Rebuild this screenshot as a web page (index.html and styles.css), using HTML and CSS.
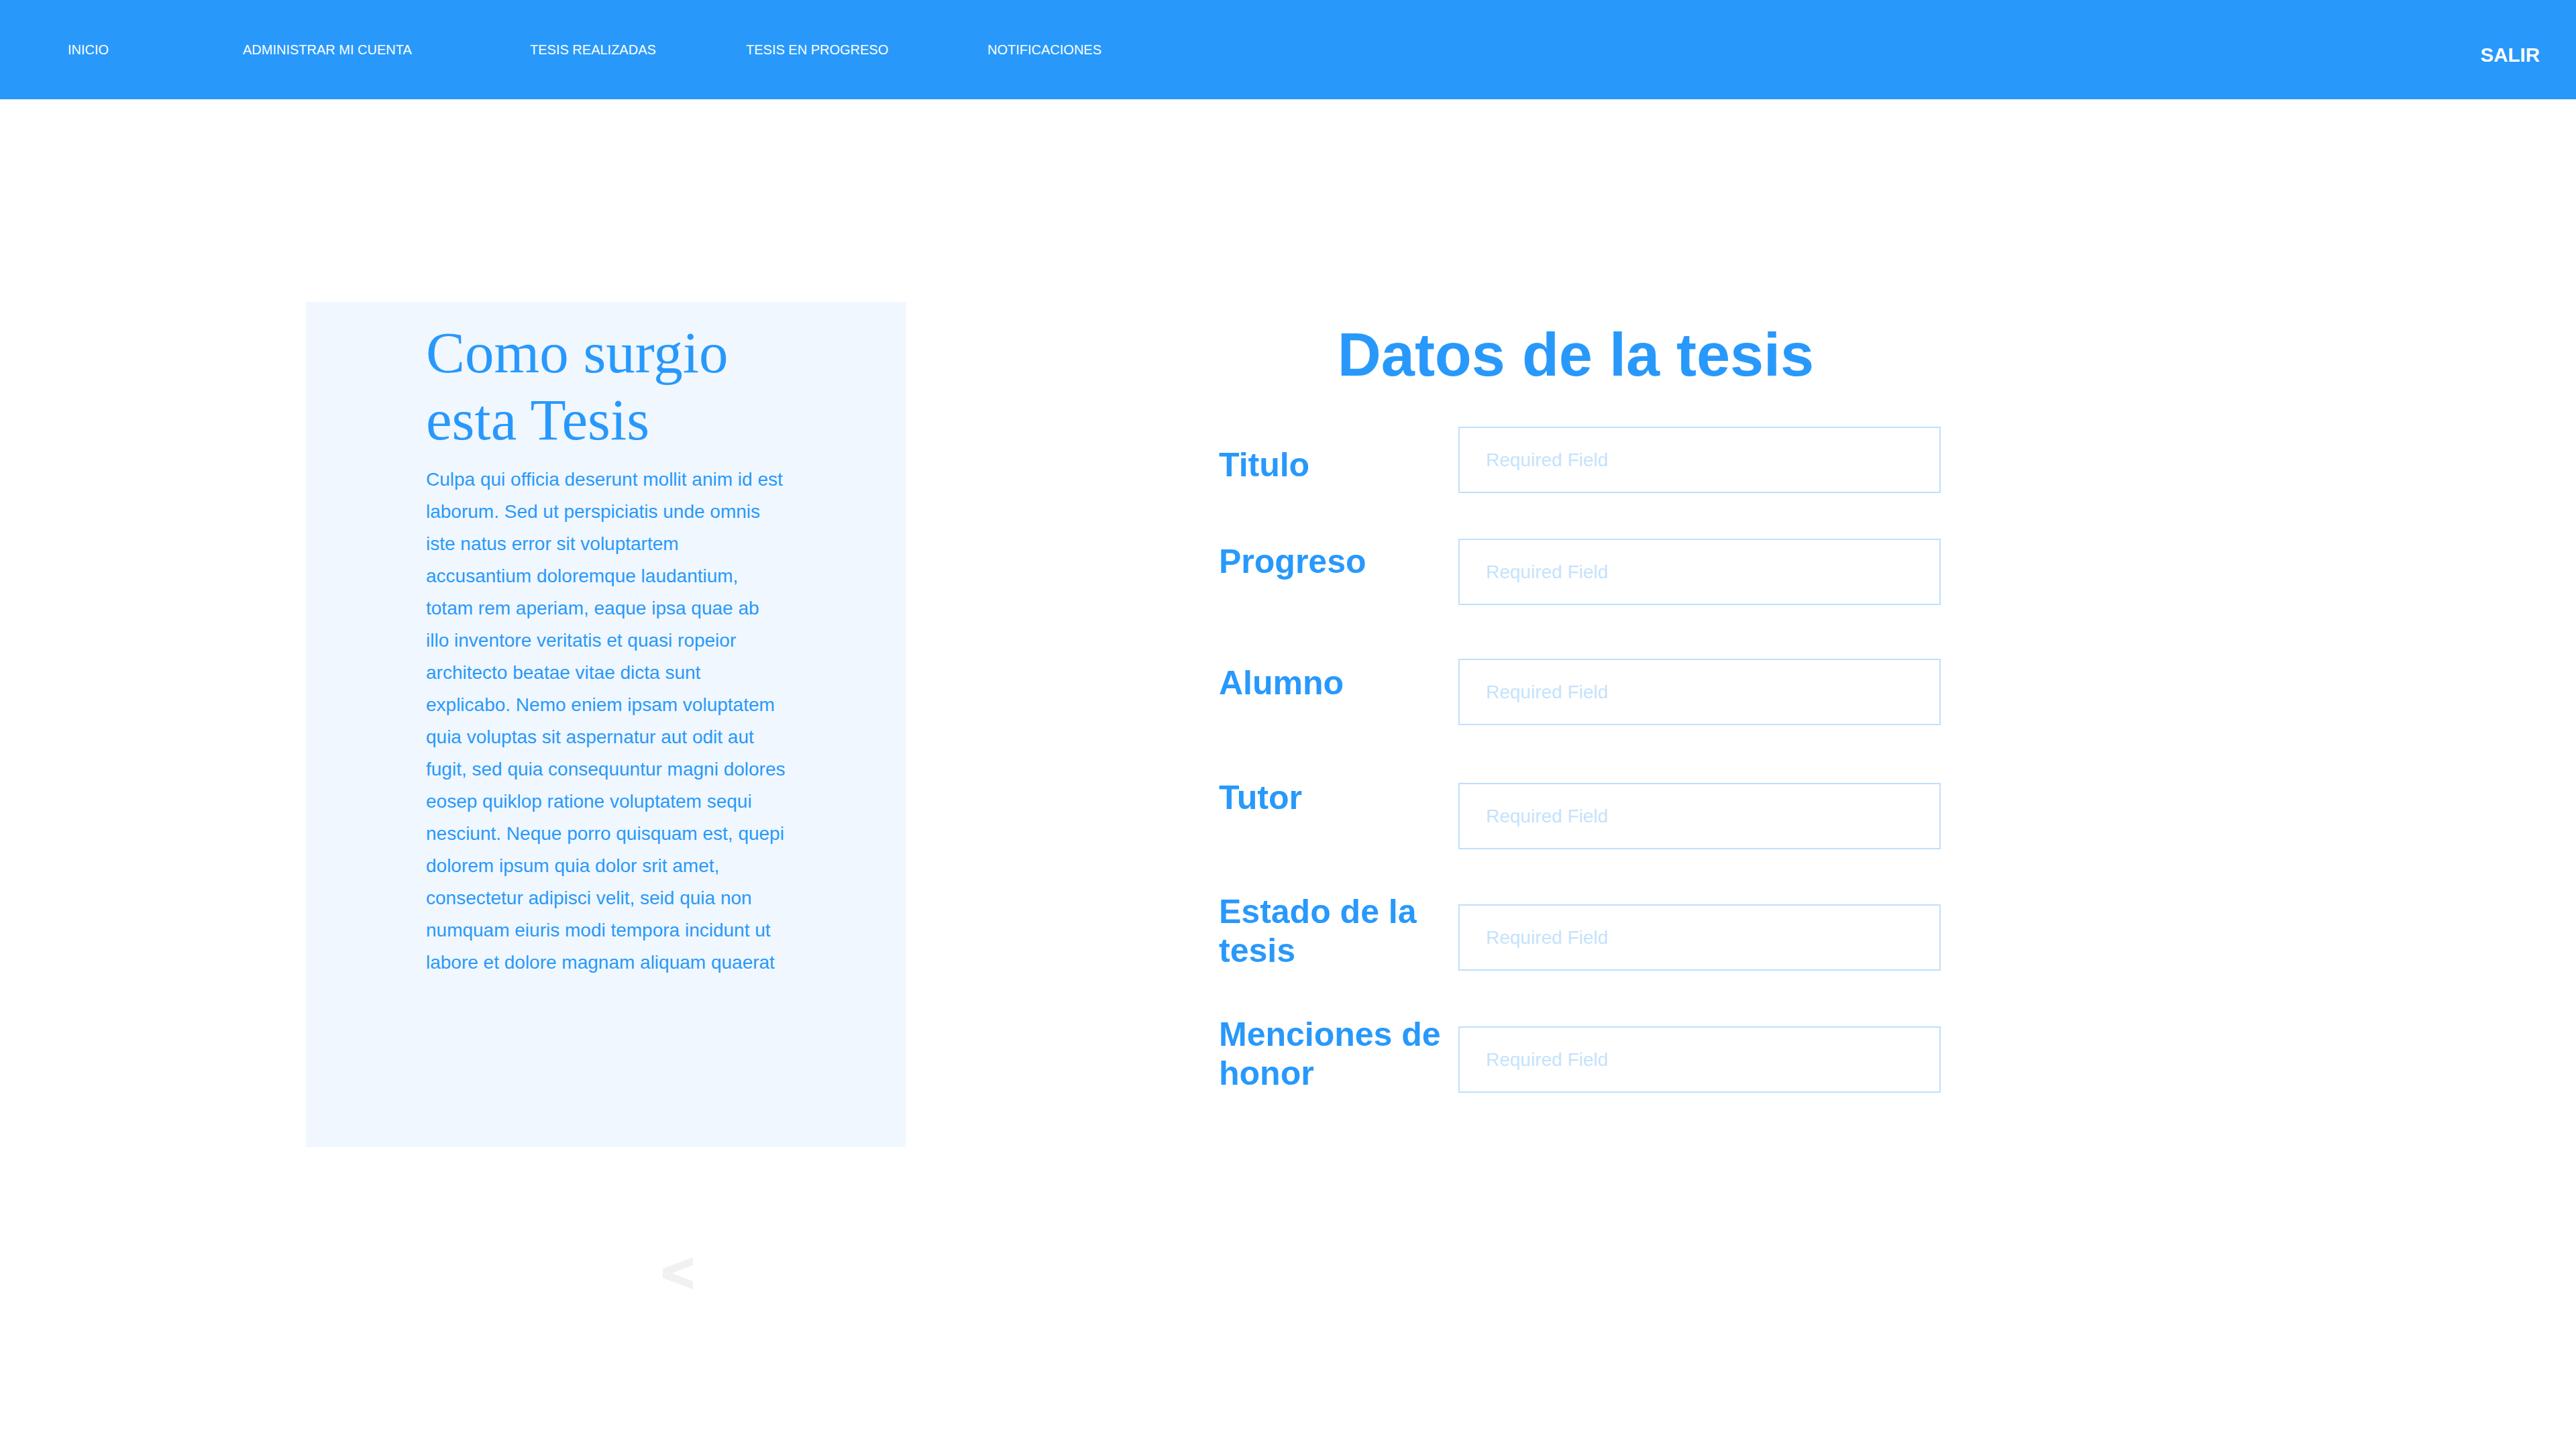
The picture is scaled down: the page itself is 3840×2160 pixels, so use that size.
FILE: index.html
```html
<!DOCTYPE html>
<html lang="es">
<head>
<meta charset="utf-8">
<title>Datos de la tesis</title>
<link rel="stylesheet" href="styles.css">
</head>
<body>
<header class="topbar">
  <nav class="nav">
    <a class="nav-link nav-inicio" href="#">INICIO</a>
    <a class="nav-link nav-cuenta" href="#">ADMINISTRAR MI CUENTA</a>
    <a class="nav-link nav-realizadas" href="#">TESIS REALIZADAS</a>
    <a class="nav-link nav-progreso" href="#">TESIS EN PROGRESO</a>
    <a class="nav-link nav-notif" href="#">NOTIFICACIONES</a>
  </nav>
  <a class="logout" href="#">SALIR</a>
</header>
<main class="content">
  <section class="story-col">
    <div class="story-card">
      <h2 class="story-title">Como surgio esta Tesis</h2>
      <p class="story-text">Culpa qui officia deserunt mollit anim id est laborum. Sed ut perspiciatis unde omnis iste natus error sit voluptartem accusantium doloremque laudantium, totam rem aperiam, eaque ipsa quae ab illo inventore veritatis et quasi ropeior architecto beatae vitae dicta sunt explicabo. Nemo eniem ipsam voluptatem quia voluptas sit aspernatur aut odit aut fugit, sed quia consequuntur magni dolores eosep quiklop ratione voluptatem sequi nesciunt. Neque porro quisquam est, quepi dolorem ipsum quia dolor srit amet, consectetur adipisci velit, seid quia non numquam eiuris modi tempora incidunt ut labore et dolore magnam aliquam quaerat</p>
    </div>
    <button class="prev-btn" type="button" aria-label="Anterior">
      <svg class="prev-icon" width="45" height="48" viewBox="0 0 45 48"><polygon points="45,0 45,12 14,24 45,36 45,48 0,31 0,17" fill="#f1f1f1"/></svg>
    </button>
  </section>
  <section class="form-col">
    <h1 class="form-title">Datos de la tesis</h1>
    <div class="field field-1">
      <label class="field-label">Titulo</label>
      <input class="field-input" type="text" placeholder="Required Field">
    </div>
    <div class="field field-2">
      <label class="field-label">Progreso</label>
      <input class="field-input" type="text" placeholder="Required Field">
    </div>
    <div class="field field-3">
      <label class="field-label">Alumno</label>
      <input class="field-input" type="text" placeholder="Required Field">
    </div>
    <div class="field field-4">
      <label class="field-label">Tutor</label>
      <input class="field-input" type="text" placeholder="Required Field">
    </div>
    <div class="field field-5">
      <label class="field-label">Estado de la tesis</label>
      <input class="field-input" type="text" placeholder="Required Field">
    </div>
    <div class="field field-6">
      <label class="field-label">Menciones de honor</label>
      <input class="field-input" type="text" placeholder="Required Field">
    </div>
  </section>
</main>
</body>
</html>
```
FILE: styles.css
```css
html, body {
  margin: 0;
  padding: 0;
  background: #ffffff;
  font-family: "Liberation Sans", Arial, sans-serif;
  color: #2899fb;
}

.topbar {
  height: 148px;
  background: #2899fb;
  display: flex;
  align-items: center;
  justify-content: space-between;
  padding: 0 54px 0 101px;
  box-sizing: border-box;
}

.nav {
  display: flex;
  align-items: center;
}

.nav-link {
  color: #ffffff;
  text-decoration: none;
  font-size: 20px;
  line-height: 24px;
  flex: none;
}

.nav-inicio { width: 261px; }
.nav-cuenta { width: 428px; }
.nav-realizadas { width: 322px; }
.nav-progreso { width: 360px; }
.nav-notif { width: auto; }

.logout {
  color: #ffffff;
  text-decoration: none;
  font-weight: bold;
  font-size: 29.5px;
  line-height: 34px;
  margin-top: 15px;
}

.content {
  display: flex;
  align-items: flex-start;
  padding: 302px 0 0 456px;
  gap: 467px;
}

.story-col {
  width: 894px;
  flex: none;
}

.story-card {
  width: 894px;
  height: 1260px;
  box-sizing: border-box;
  background: #f0f7fe;
  padding: 26px 0 0 179px;
}

.story-title {
  margin: 0;
  width: 538px;
  font-family: "Liberation Serif", "Times New Roman", serif;
  font-weight: normal;
  font-size: 87px;
  line-height: 100px;
  color: #2899fb;
}

.story-text {
  margin: 15px 0 0;
  width: 538px;
  font-size: 28px;
  line-height: 48px;
  color: #2899fb;
}

.prev-btn {
  display: block;
  margin: 164px 0 0 532px;
  padding: 0;
  border: 0;
  background: transparent;
  width: 45px;
  height: 48px;
  cursor: pointer;
}

.prev-icon {
  display: block;
}

.form-col {
  width: 1076px;
  flex: none;
  padding-top: 29px;
}

.form-title {
  margin: 0;
  padding-right: 12px;
  text-align: center;
  font-weight: bold;
  font-size: 90px;
  line-height: 100px;
  color: #2899fb;
}

.field {
  display: flex;
  align-items: flex-start;
}

.field-label {
  width: 357px;
  flex: none;
  font-weight: bold;
  font-size: 50px;
  line-height: 58px;
  color: #2899fb;
}

.field-input {
  width: 720px;
  height: 99px;
  box-sizing: border-box;
  border: 2px solid #bfe0fc;
  border-radius: 0;
  padding: 0 0 0 39px;
  margin: 0;
  background: #ffffff;
  font-family: "Liberation Sans", Arial, sans-serif;
  font-size: 28px;
  color: #2899fb;
  outline: none;
}

.field-input::placeholder {
  color: #c4e2fd;
  opacity: 1;
}

.field-1 { margin-top: 57px; }
.field-1 .field-label { margin-top: 28px; }

.field-2 { margin-top: 68px; }
.field-2 .field-label { margin-top: 5px; }

.field-3 { margin-top: 80px; }
.field-3 .field-label { margin-top: 7px; }

.field-4 { margin-top: 79px; }
.field-4 .field-input { margin-top: 7px; }

.field-5 { margin-top: 64px; }
.field-5 .field-input { margin-top: 18px; }

.field-6 { margin-top: 66px; }
.field-6 .field-input { margin-top: 17px; }
```
